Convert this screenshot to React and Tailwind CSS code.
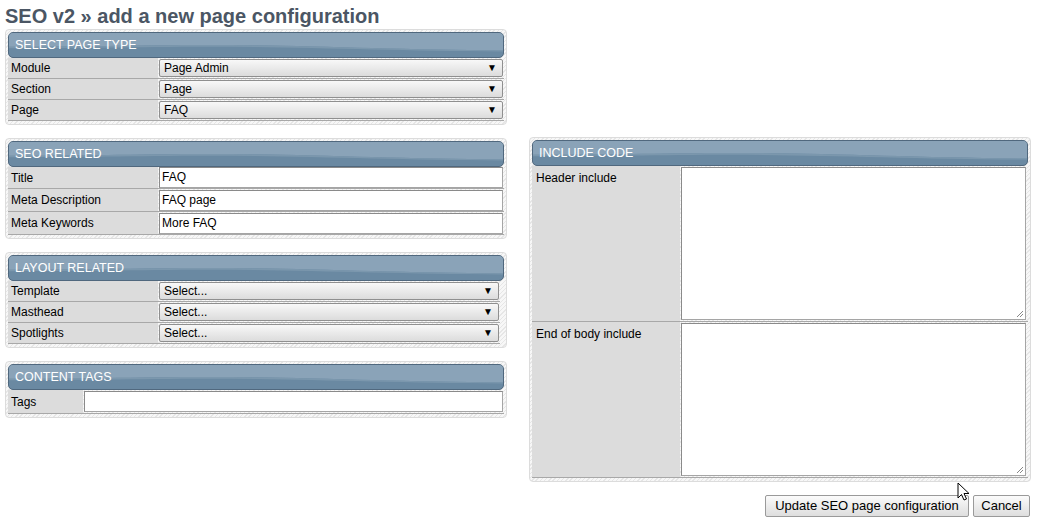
import React from "react";

const hatch =
  "bg-[repeating-linear-gradient(135deg,#e6e6e6_0px,#e6e6e6_1px,#f7f7f7_1px,#f7f7f7_3px)]";

function Header({ title }) {
  return (
    <div className="relative h-[26px] overflow-hidden rounded-[5px] border border-[#50687e] bg-[#6a89a2]">
      <svg
        className="absolute inset-0 h-full w-full"
        viewBox="0 0 100 26"
        preserveAspectRatio="none"
      >
        <path d="M0 0 H100 V19 C75 18 55 12 35 13 C20 14 10 15 0 15 Z" fill="#8aa3b8" />
        <path d="M0 15 C10 15 20 14 35 13 C55 12 75 18 100 19 V20 C75 19.5 55 14 35 15 C20 16 10 16.5 0 16.5 Z" fill="#7b97ad" />
      </svg>
      <div className="relative pl-[6px] text-[12.5px] leading-[24px] text-white">{title}</div>
    </div>
  );
}

function Panel({ title, children, className = "" }) {
  return (
    <div className={`rounded-[4px] border border-[#dcdcdc] p-[2px] pb-[3px] ${hatch} ${className}`}>
      <Header title={title} />
      <div>{children}</div>
    </div>
  );
}

function Select({ value }) {
  return (
    <div className="flex h-[18px] items-center justify-between rounded-[2px] border border-[#8f8f8f] bg-gradient-to-b from-[#f8f8f8] to-[#dcdcdc] pl-[4px] pr-[5px] text-[12px] leading-[16px] text-black">
      <span>{value}</span>
      <span className="text-[10px] leading-[10px]">▼</span>
    </div>
  );
}

function Input({ value }) {
  return (
    <div className="h-[21px] border border-[#a5a5a5] border-t-[#8a8a8a] border-l-[#8a8a8a] bg-white pl-[2px] text-[12px] leading-[19px] text-black">
      {value}
    </div>
  );
}

function Row({ label, children, labelW = "w-[150px]", h = "h-[21px]" }) {
  return (
    <div className={`flex ${h} border-b border-[#a8a8a8]`}>
      <div className={`${labelW} flex shrink-0 items-center bg-[#dcdcdc] pl-[3px] text-[12px] text-black`}>
        {label}
      </div>
      <div className="flex flex-1 flex-col justify-center pl-[1px] pr-[1px]">{children}</div>
    </div>
  );
}

function TextArea() {
  return (
    <div className="relative h-[153px] border border-[#a5a5a5] border-t-[#8a8a8a] border-l-[#8a8a8a] bg-white">
      <svg className="absolute bottom-[1px] right-[1px]" width="8" height="8" viewBox="0 0 8 8">
        <path d="M7 1 L1 7 M7 4 L4 7" stroke="#888" strokeWidth="1" />
      </svg>
    </div>
  );
}

function Button({ children, className = "" }) {
  return (
    <div
      className={`flex h-[22px] items-center justify-center rounded-[2px] border border-[#9a9a9a] bg-gradient-to-b from-[#fbfbfb] to-[#dedede] text-[13px] text-black ${className}`}
    >
      {children}
    </div>
  );
}

export default function App() {
  return (
    <div className="relative h-[526px] w-[1039px] overflow-hidden bg-white font-['Liberation_Sans',Arial,sans-serif]">
      <h1 className="pl-[5px] pt-[4px] text-[20px] font-bold leading-[24px] text-[#4b5664]">
        SEO v2 » add a new page configuration
      </h1>
      <div className="flex items-start gap-[22px] pl-[5px] pt-[1px]">
        <div className="flex w-[502px] flex-col">
          <Panel title="SELECT PAGE TYPE">
            <Row label="Module">
              <Select value="Page Admin" />
            </Row>
            <Row label="Section">
              <Select value="Page" />
            </Row>
            <Row label="Page">
              <Select value="FAQ" />
            </Row>
          </Panel>

          <Panel title="SEO RELATED" className="mt-[13px]">
            <Row label="Title" h="h-[22px]">
              <Input value="FAQ" />
            </Row>
            <Row label="Meta Description" h="h-[23px]">
              <Input value="FAQ page" />
            </Row>
            <Row label="Meta Keywords" h="h-[23px]">
              <Input value="More FAQ" />
            </Row>
          </Panel>

          <Panel title="LAYOUT RELATED" className="mt-[13px]">
            <div className="pr-[4px]">
              <Row label="Template">
                <Select value="Select..." />
              </Row>
              <Row label="Masthead">
                <Select value="Select..." />
              </Row>
              <Row label="Spotlights">
                <Select value="Select..." />
              </Row>
            </div>
          </Panel>

          <Panel title="CONTENT TAGS" className="mt-[13px]">
            <Row label="Tags" labelW="w-[75px]" h="h-[24px]">
              <Input value="" />
            </Row>
          </Panel>
        </div>

        <div className="mt-[108px] flex w-[502px] flex-col">
          <Panel title="INCLUDE CODE">
            <div className="flex border-b border-[#a8a8a8] py-[1px]">
              <div className="-my-[1px] w-[148px] shrink-0 bg-[#dcdcdc] pl-[4px] pt-[3px] text-[12px] text-black">
                Header include
              </div>
              <div className="flex-1 pl-[1px] pr-[2px]">
                <TextArea />
              </div>
            </div>
            <div className="flex border-b border-[#a8a8a8] py-[1px]">
              <div className="-my-[1px] w-[148px] shrink-0 bg-[#dcdcdc] pl-[4px] pt-[3px] text-[12px] text-black">
                End of body include
              </div>
              <div className="flex-1 pl-[1px] pr-[2px]">
                <TextArea />
              </div>
            </div>
          </Panel>
          <div className="mt-[13px] flex justify-end gap-[4px] pr-[1px]">
            <Button className="w-[204px]">Update SEO page configuration</Button>
            <Button className="w-[57px]">Cancel</Button>
          </div>
        </div>
      </div>

      <svg
        className="absolute left-[957px] top-[482px]"
        width="14"
        height="20"
        viewBox="0 0 14 20"
      >
        <path
          d="M1 1 L1 16 L4.5 12.5 L7 18 L9.5 17 L7 11.5 L12 11.5 Z"
          fill="#ffffff"
          stroke="#000000"
          strokeWidth="1"
          strokeLinejoin="round"
        />
      </svg>
    </div>
  );
}
